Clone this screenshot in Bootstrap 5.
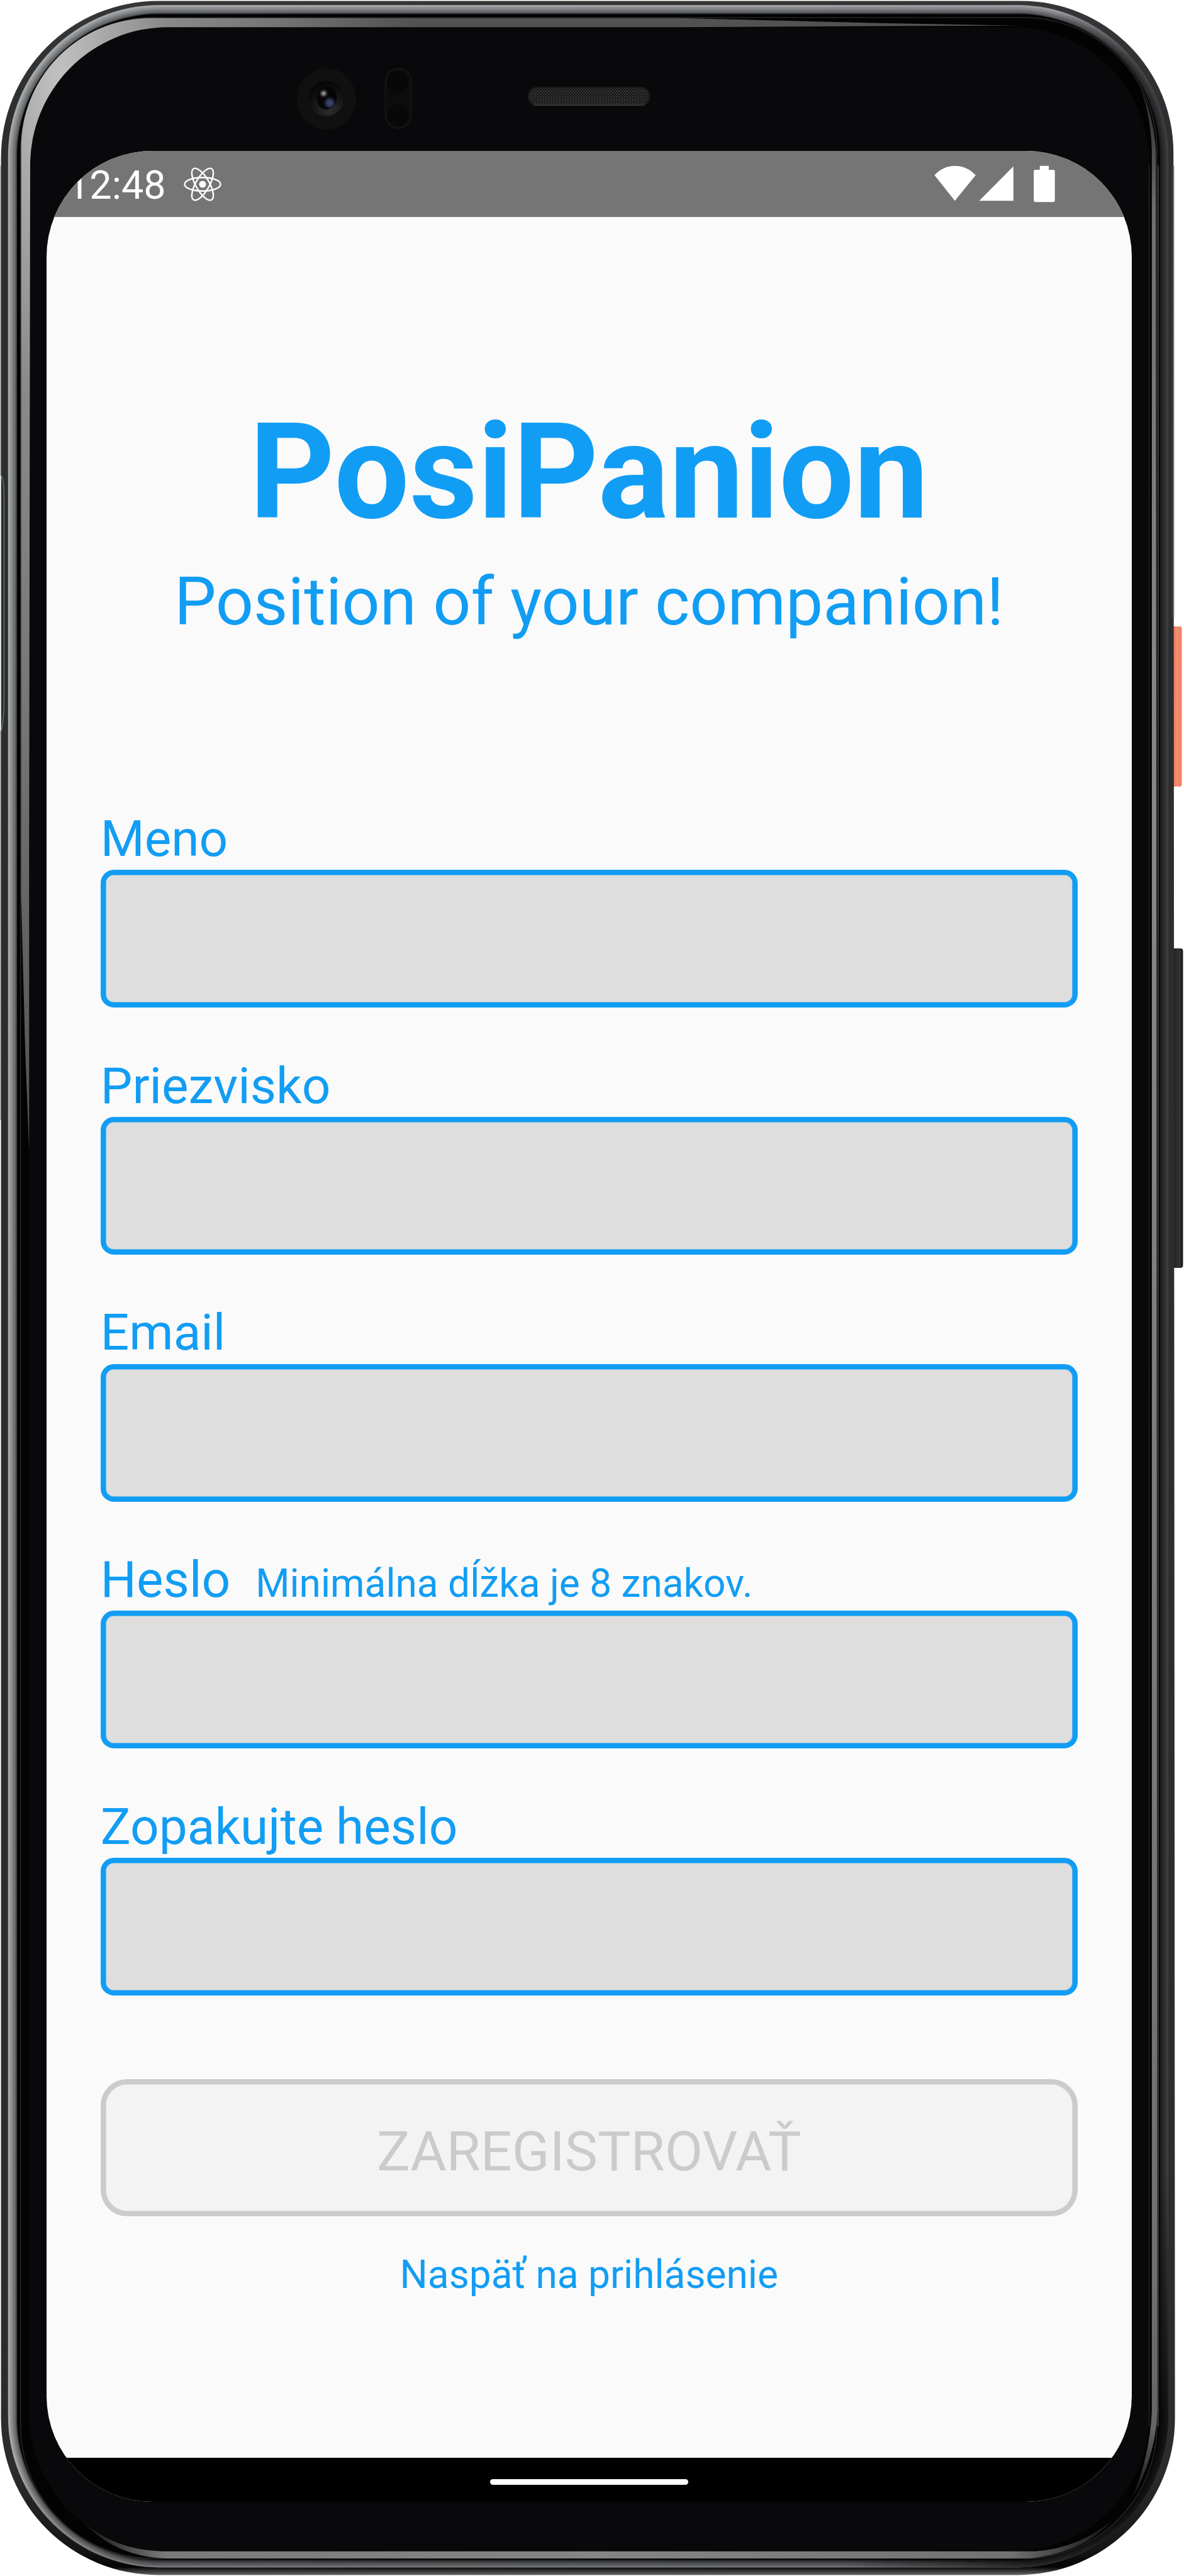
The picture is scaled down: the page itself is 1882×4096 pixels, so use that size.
<!DOCTYPE html>
<html lang="sk">
<head>
<meta charset="utf-8">
<meta name="viewport" content="width=device-width, initial-scale=1">
<title>PosiPanion</title>
<link href="https://cdn.jsdelivr.net/npm/bootstrap@5.3.0/dist/css/bootstrap.min.css" rel="stylesheet">
<style>
  :root { --brand: #129df4; }
  body { font-family: Roboto, "Noto Sans", sans-serif; background: #fff; overflow: hidden; }
  .device { width: 1882px; height: 4096px; padding: 239.6px 83.1px 117.9px 73.5px; }
  .device-frame { width: 1882px; height: 4096px; }
  .app-screen { border-radius: 168px; background: #fafafa; }
  .status-strip { height: 105.4px; background: #757575; padding: 0 93px 0 33.5px; }
  .clock { font-size: 62.9px; line-height: 74px; padding-top: 5px; }
  .status-strip svg { display: block; }
  .react-icon { margin-left: 27px; margin-top: 2px; }
  .app-main { padding: 286px 86.3px 0; color: var(--brand); }
  .brand-title { font-size: 211.5px; line-height: 240px; font-weight: 700; }
  .brand-sub { font-size: 105.6px; line-height: 124px; margin: 23.6px 0 268.3px; }
  .field + .field { margin-top: 77.4px; }
  .field-label { font-size: 80.2px; line-height: 94px; margin-bottom: 2.5px; }
  .field-hint { font-size: 62.2px; line-height: 74px; margin-left: 40px; }
  .field .form-control { height: 218.8px; border: 8px solid var(--brand); border-radius: 21px; background: #dedede; box-shadow: inset 0 0 0 .6px var(--brand); }
  .btn-register { height: 218.6px; margin-top: 132.9px; padding: 11px 0 0; border: 8px solid #cbcbcb; border-radius: 42px; font-size: 88px; line-height: 1; box-shadow: inset 0 0 0 .6px #cbcbcb; }
  .btn-register:disabled { background: #f3f3f3; color: #cbcbcb; border-color: #cbcbcb; opacity: 1; }
  .back-link { color: var(--brand); font-size: 62.2px; line-height: 74px; margin-top: 55.5px; }
  .nav-strip { height: 70.3px; background: #000; padding-top: 7px; }
  .home-pill { width: 315px; height: 9px; }
</style>
</head>
<body>
<div class="device position-relative d-flex flex-column">
  <svg class="device-frame position-absolute top-0 start-0" viewBox="0 0 2356 5128" preserveAspectRatio="none" aria-hidden="true">
    <defs>
      <linearGradient id="shell" gradientUnits="userSpaceOnUse" x1="0" y1="0" x2="0" y2="5128">
        <stop offset="0" stop-color="#363636"/><stop offset=".05" stop-color="#2e2e2e"/><stop offset=".96" stop-color="#2c2c2c"/>
        <stop offset=".99" stop-color="#151515"/><stop offset=".9965" stop-color="#040404"/><stop offset="1" stop-color="#747474"/>
      </linearGradient>
      <linearGradient id="metal" gradientUnits="userSpaceOnUse" x1="0" y1="0" x2="2336" y2="0">
        <stop offset="0" stop-color="#a5a8ab"/><stop offset=".9" stop-color="#999ba0"/><stop offset=".965" stop-color="#45474a"/><stop offset="1" stop-color="#3a3c3f"/>
      </linearGradient>
      <linearGradient id="lowdim" gradientUnits="userSpaceOnUse" x1="0" y1="4900" x2="0" y2="5110">
        <stop offset="0" stop-color="#000" stop-opacity="0"/><stop offset="1" stop-color="#000" stop-opacity=".3"/>
      </linearGradient>
      <linearGradient id="brdim" gradientUnits="userSpaceOnUse" x1="2000" y1="4700" x2="2240" y2="4900">
        <stop offset="0" stop-color="#000" stop-opacity="0"/><stop offset="1" stop-color="#000" stop-opacity=".65"/>
      </linearGradient>
      <radialGradient id="bevel" gradientUnits="userSpaceOnUse" cx="0" cy="0" r="1" gradientTransform="translate(120 170) scale(700 2100)">
        <stop offset="0" stop-color="#c2c2c2"/><stop offset=".13" stop-color="#a9a9a9"/><stop offset=".3" stop-color="#8a8a8a"/>
        <stop offset=".6" stop-color="#767676"/><stop offset="1" stop-color="#525252"/>
      </radialGradient>
      <linearGradient id="sidebevel" x1="0" y1="0" x2="0" y2="1">
        <stop offset="0" stop-color="#222"/><stop offset=".05" stop-color="#6e6e6e"/><stop offset=".25" stop-color="#888"/>
        <stop offset=".9" stop-color="#707070"/><stop offset=".97" stop-color="#666"/><stop offset="1" stop-color="#111"/>
      </linearGradient>
      <linearGradient id="footbevel" x1="0" y1="0" x2="1" y2="0">
        <stop offset="0" stop-color="#111"/><stop offset=".08" stop-color="#7a7a7a"/><stop offset=".5" stop-color="#858585"/>
        <stop offset=".9" stop-color="#727272"/><stop offset="1" stop-color="#111"/>
      </linearGradient>
      <linearGradient id="power" x1="0" y1="0" x2="1" y2="0">
        <stop offset="0" stop-color="#d8583d"/><stop offset=".25" stop-color="#f4745a"/><stop offset=".65" stop-color="#ef927a"/><stop offset=".85" stop-color="#ee7c59"/><stop offset="1" stop-color="#f3a58d"/>
      </linearGradient>
      <linearGradient id="volume" x1="0" y1="0" x2="1" y2="0">
        <stop offset="0" stop-color="#151515"/><stop offset=".4" stop-color="#292929"/><stop offset=".75" stop-color="#333"/><stop offset="1" stop-color="#0d0d0d"/>
      </linearGradient>
      <pattern id="mesh" width="5.4" height="6" patternUnits="userSpaceOnUse">
        <rect width="5.4" height="6" fill="#111"/><rect width="2.4" height="3" fill="#444"/><rect x="2.7" y="3" width="2.4" height="3" fill="#363636"/>
      </pattern>
      <radialGradient id="lens" cx=".6" cy=".85" r=".8">
        <stop offset="0" stop-color="#2c2c2c"/><stop offset="1" stop-color="#060606"/>
      </radialGradient>
      <filter id="soft" x="-50%" y="-50%" width="200%" height="200%"><feGaussianBlur stdDeviation="2.5"/></filter>
    </defs>

    <!-- side buttons -->
    <rect x="2328" y="1247" width="24" height="319" rx="5" fill="url(#power)"/>
    <rect x="2330" y="1888" width="24" height="636" rx="5" fill="url(#volume)"/>

    <!-- shell -->
    <rect x="0" y="330" width="3" height="1900" fill="#bdbdbd"/>
    <path d="M2 314A312 312 0 0 1 314 2H2033A302 302 0 0 1 2335 304L2338 4814A312 312 0 0 1 2026 5126H314A312 312 0 0 1 2 4814Z" fill="url(#shell)"/>
    <rect x="0" y="945" width="2" height="515" fill="#f2f2f2"/>
    <path d="M1 945Q8 950 8 985V1390Q8 1440 1 1460" fill="none" stroke="#666b6b" stroke-width="2"/>
    <rect x="2334" y="330" width="2.5" height="900" fill="#777"/>
    <rect x="16" y="10" width="2309" height="5101" rx="301" fill="url(#metal)"/>
    <rect x="16" y="10" width="2309" height="5101" rx="301" fill="url(#lowdim)"/>
    <rect x="16" y="10" width="2309" height="5101" rx="301" fill="url(#brdim)"/>
    <g fill="#000" fill-opacity=".13">
      <rect x="20" y="14" width="2302" height="5094" rx="298"/>
      <rect x="24" y="18" width="2295" height="5088" rx="294"/>
      <rect x="27" y="21" width="2289" height="5082" rx="291"/>
      <rect x="30" y="24" width="2283" height="5077" rx="288"/>
      <rect x="32" y="26" width="2278" height="5073" rx="285" fill-opacity=".35"/>
    </g>
    <rect x="34" y="28" width="2274" height="5068" rx="282" fill="#030303"/>
    <rect x="41" y="35" width="2261" height="5058" rx="264" fill="none" stroke="#262626" stroke-width="2"/>
    <rect x="58" y="54" width="2230" height="5025" rx="274" fill="#09090b"/>
    <rect x="2286" y="330" width="1.5" height="4500" fill="#2a2a2a"/>
    <rect x="2303" y="330" width="3" height="4500" fill="#353838"/>

    <!-- glass bevel highlights -->
    <path d="M58 2292L50 2085L42 1780V294A258 258 0 0 1 300 36H1350L1750 46L2030 51L1750 52L1350 54H335A275 275 0 0 0 60 330L58 1700Z" fill="url(#bevel)"/>
    <path d="M2268 172Q2290 230 2292 300V4800Q2288 4890 2252 4975Q2300 4890 2303 4800L2300 300Q2296 230 2268 172Z" fill="url(#sidebevel)"/>
    <path d="M165 5020Q230 5078 330 5079H2060Q2150 5072 2215 5015Q2160 5080 2050 5093H330Q230 5090 165 5020Z" fill="url(#footbevel)"/>

    <!-- camera -->
    <ellipse cx="649.5" cy="197" rx="59" ry="61" fill="#101010"/>
    <circle cx="649" cy="196" r="35" fill="url(#lens)"/>
    <ellipse cx="650" cy="195" rx="20" ry="23" fill="#050508"/>
    <circle cx="656" cy="205" r="9" fill="#3b4568" filter="url(#soft)"/>
    <circle cx="644" cy="186" r="4.5" fill="#ccc" filter="url(#soft)"/>
    <!-- proximity sensors -->
    <rect x="767" y="137" width="51" height="118" rx="25" fill="#0c0c0d" stroke="#151515" stroke-width="3"/>
    <circle cx="792" cy="163" r="21" fill="#08080a"/><circle cx="792" cy="229" r="21" fill="#08080a"/>
    <!-- earpiece -->
    <rect x="1052" y="174.500" width="240" height="35" rx="16" fill="url(#mesh)" stroke="#1c1c1c" stroke-width="3"/>
    <path d="M1062 209H1282" stroke="#343434" stroke-width="2.500"/>
  </svg>

  <div class="app-screen position-relative flex-grow-1 d-flex flex-column overflow-hidden">
    <header class="status-strip d-flex align-items-center justify-content-between text-white">
      <div class="d-flex align-items-center">
        <span class="clock">12:48</span>
        <svg class="react-icon" width="62" height="56" viewBox="-39 -35 78 70" fill="none" stroke="#fff" stroke-width="3">
          <ellipse rx="36" ry="13.500"/><ellipse rx="36" ry="13.500" transform="rotate(60)"/><ellipse rx="36" ry="13.500" transform="rotate(120)"/>
          <circle r="7" fill="#fff" stroke="none"/>
        </svg>
      </div>
      <svg width="221.300" height="60" viewBox="1858 328 277 75" fill="#fff" preserveAspectRatio="xMinYMid meet">
        <path d="M1858.500 348.500Q1876 330 1899 330T1940.500 348.500L1899 399.500Z"/>
        <path d="M2015.500 331V399.500H1947.500Z"/>
        <path d="M2068 330H2086V338H2095Q2098 338 2098 341V399Q2098 402 2095 402H2059Q2056 402 2056 399V341Q2056 338 2059 338H2068Z"/>
      </svg>
    </header>

    <main class="app-main flex-grow-1 d-flex flex-column">
      <h1 class="brand-title text-center mb-0">PosiPanion</h1>
      <p class="brand-sub text-center">Position of your companion!</p>
      <form class="d-flex flex-column">
        <div class="field">
          <label class="field-label d-block" for="meno">Meno</label>
          <input class="form-control" id="meno" type="text">
        </div>
        <div class="field">
          <label class="field-label d-block" for="priezvisko">Priezvisko</label>
          <input class="form-control" id="priezvisko" type="text">
        </div>
        <div class="field">
          <label class="field-label d-block" for="email">Email</label>
          <input class="form-control" id="email" type="email">
        </div>
        <div class="field">
          <label class="field-label d-flex align-items-baseline" for="heslo">Heslo<span class="field-hint">Minimálna dĺžka je 8 znakov.</span></label>
          <input class="form-control" id="heslo" type="password">
        </div>
        <div class="field">
          <label class="field-label d-block" for="heslo2">Zopakujte heslo</label>
          <input class="form-control" id="heslo2" type="password">
        </div>
        <button class="btn btn-register w-100" type="submit" disabled>ZAREGISTROVAŤ</button>
        <a class="back-link text-center text-decoration-none" href="#">Naspäť na prihlásenie</a>
      </form>
    </main>

    <div class="nav-strip d-flex align-items-center justify-content-center">
      <div class="home-pill bg-white rounded-pill"></div>
    </div>
  </div>
</div>
<script src="https://cdn.jsdelivr.net/npm/bootstrap@5.3.0/dist/js/bootstrap.bundle.min.js"></script>
</body>
</html>
